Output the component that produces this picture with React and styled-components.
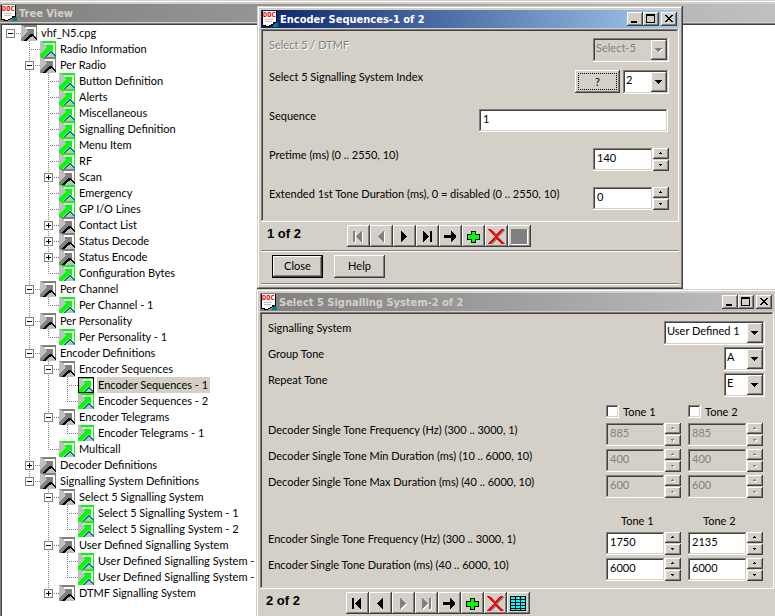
import React from "react";
import styled, { createGlobalStyle, css } from "styled-components";

const GlobalStyle = createGlobalStyle`
  * {
    box-sizing: border-box;
  }

  body {
    margin: 0;
    background: #ffffff;
    color: #000000;
    font-family: Lato, "Liberation Sans", sans-serif;
    font-size: 11px;
    line-height: 13px;
  }

  button, input, select {
    margin: 0;
    padding: 0;
    border: 0;
    border-radius: 0;
    outline: 0;
    color: inherit;
    font: inherit;
  }
`;

const raised = css`
  background: #d4d0c8;
  box-shadow: inset -1px -1px #404040, inset 1px 1px #ffffff,
    inset -2px -2px #808080;
`;

const sunken = css`
  box-shadow: inset -1px -1px #ffffff, inset 1px 1px #808080,
    inset -2px -2px #d4d0c8, inset 2px 2px #404040;
`;

const Desktop = styled.main`
  position: relative;
  height: 100vh;
  overflow: hidden;
  background: #ffffff;
`;

/* windows */

const TitleBar = styled.header`
  display: flex;
  align-items: center;
  height: 18px;
  padding: 0 2px 0 1px;
  background: ${(p) =>
    p.$active
      ? "linear-gradient(90deg, #0a246a, #a6caf0)"
      : "linear-gradient(90deg, #808080, #c0c0c0)"};
  color: ${(p) => (p.$active ? "#ffffff" : "#d4d0c8")};
`;

const Title = styled.h1`
  flex: 1;
  margin: 0 0 0 2px;
  padding-top: 1px;
  font-family: "DejaVu Sans Condensed", "DejaVu Sans", sans-serif;
  font-size: 11px;
  font-weight: bold;
  line-height: 16px;
  white-space: nowrap;
`;

const WindowButton = styled.button`
  ${raised}
  display: flex;
  width: 16px;
  height: 14px;
  color: #000000;

  &:last-child {
    margin-left: 2px;
  }
`;

const Frame = styled.section`
  position: absolute;
  padding: 4px;
  background: #d4d0c8;
  box-shadow: inset -1px -1px #404040, inset 1px 1px #d4d0c8,
    inset -2px -2px #808080, inset 2px 2px #ffffff;
`;

const SequenceFrame = styled(Frame)`
  left: 257px;
  top: 6px;
  width: 426px;
`;

const SystemFrame = styled(Frame)`
  left: 256px;
  right: -3px;
  top: 289px;
`;

const Panel = styled.div`
  ${sunken}
  margin-top: 1px;
  padding: ${(p) => p.$padding};
`;

/* tree */

const TreeWindow = styled.section`
  padding-top: 4px;
  background: linear-gradient(#d4d0c8 1px, #ffffff 1px, #ffffff 2px, #d4d0c8 2px);
`;

const TreePane = styled.nav`
  min-height: 100vh;
  margin-top: 1px;
  border-top: 1px solid #808080;
  border-left: 1px solid #808080;
  box-shadow: inset 1px 1px #404040;
  padding: 1px 0 0 1px;
  background: #ffffff;
`;

const TreeList = styled.ul`
  margin: 0;
  padding: 0;
  list-style: none;
`;

const TreeRow = styled.div`
  display: flex;
  height: 16px;
`;

const Guide = styled.span`
  display: flex;
  flex: none;
  align-items: center;
  width: 19px;
  height: 16px;
  padding: 1px 0 0 4px;
  background-image: ${(p) =>
      p.$line
        ? "repeating-linear-gradient(180deg, #808080 0 1px, transparent 1px 2px)"
        : "none"},
    ${(p) =>
      p.$branch
        ? "repeating-linear-gradient(90deg, #808080 0 1px, transparent 1px 2px)"
        : "none"};
  background-repeat: no-repeat;
  background-position: 8px 0, 8px 8px;
  background-size: 1px ${(p) => (p.$line === "half" ? "9px" : "16px")}, 11px 1px;
`;

const Expander = styled.button`
  display: flex;
  width: 9px;
  height: 9px;
  background: #ffffff;
  border: 1px solid #808080;
`;

const TreeLabel = styled.button`
  margin-left: 3px;
  padding: 0 2px 1px 1px;
  background: ${(p) => (p.$selected ? "#d4d0c8" : "transparent")};
  line-height: 15px;
  white-space: nowrap;
`;

/* form parts */

const Row = styled.div`
  display: flex;
  align-items: flex-start;
  height: ${(p) => p.$height}px;
`;

const Label = styled.label`
  flex: 1;
  white-space: nowrap;
  color: ${(p) => (p.$disabled ? "#808080" : "#000000")};
  text-shadow: ${(p) => (p.$disabled ? "1px 1px #ffffff" : "none")};
`;

const SelectBox = styled.div`
  position: relative;
  width: ${(p) => p.$width}px;
  height: 24px;
`;

const SelectInput = styled.select`
  ${sunken}
  appearance: none;
  width: 100%;
  height: 24px;
  padding: 0 18px 5px 3px;
  background: #ffffff;
  opacity: 1;

  &:disabled {
    background: #d4d0c8;
    color: #808080;
  }
`;

const SelectArrow = styled.span`
  ${raised}
  position: absolute;
  top: 2px;
  right: 2px;
  display: flex;
  align-items: center;
  justify-content: center;
  width: 16px;
  height: 20px;
  pointer-events: none;
`;

const TextInput = styled.input`
  ${sunken}
  flex: 1;
  min-width: 0;
  height: 23px;
  padding: 0 3px 4px 4px;
  background: #ffffff;

  &:disabled {
    background: #d4d0c8;
    color: #808080;
  }
`;

const WideField = styled.div`
  display: flex;
  width: 189px;
  margin-right: 1px;
`;

const SpinField = styled.div`
  display: flex;
  width: ${(p) => p.$width}px;
`;

const Spinner = styled.div`
  display: flex;
  flex-direction: column;
  gap: 1px;
  width: 16px;
`;

const SpinButton = styled.button`
  ${raised}
  display: flex;
  align-items: center;
  justify-content: center;
  height: 11px;
`;

const HelpIndex = styled.button`
  ${raised}
  width: 45px;
  height: 23px;
  margin-right: 3px;
  padding: 3px;

  span {
    display: block;
    border: 1px dotted #000000;
    line-height: 15px;
  }
`;

const Tones = styled.div`
  display: grid;
  grid-template-columns: 75px 75px;
  gap: 7px;
  margin-right: 2px;
`;

const ToneCheck = styled.label`
  display: flex;
  align-items: center;
  gap: 4px;
  padding-top: 6px;
`;

const CheckBox = styled.input`
  ${sunken}
  appearance: none;
  width: 13px;
  height: 13px;
  margin: 0;
  background: #ffffff;
`;

const ToneHeading = styled.span`
  padding: 13px 0 0 15px;
`;

/* record bar */

const RecordBar = styled.div`
  display: flex;
  height: 28px;
  padding: 3px 0 3px 6px;
`;

const Counter = styled.output`
  width: 80px;
  font-family: "Liberation Sans", sans-serif;
  font-size: 13px;
  font-weight: bold;
  line-height: 18px;
`;

const ToolButton = styled.button`
  ${raised}
  display: flex;
  align-items: center;
  justify-content: center;
  width: 23px;
  height: 22px;
`;

const Actions = styled.footer`
  display: flex;
  gap: 11px;
  height: 34px;
  margin-bottom: 1px;
  padding: 4px 11px 5px;
  border-top: 1px solid #808080;
  border-bottom: 1px solid #808080;
  box-shadow: inset 0 1px #ffffff, 0 1px #ffffff;
`;

const ActionButton = styled.button`
  ${raised}
  width: 51px;
  height: 23px;
  padding-bottom: 2px;
  border: ${(p) => (p.$default ? "1px solid #000000" : "0")};
`;

function DocIcon() {
  return (
    <svg width="16" height="16" viewBox="0 0 16 16" shapeRendering="crispEdges">
      <path d="M12 12h4v4h-5z" fill="#008080" />
      <path d="M0 0h15v12h-2v1h-2v1H9v1H7v1H3v-1H0z" fill="#000000" />
      <path d="M1 0h13v11h-3v2H9v1H7v1H4v-1H1z" fill="#ffffff" />
      <path d="M3 8.500h8M3 10.500h7" stroke="#c0c0c0" />
      <text
        x="1"
        y="6"
        fill="#ff0000"
        fontFamily="DejaVu Sans Mono"
        fontSize="7"
        fontWeight="bold"
      >
        DOC
      </text>
    </svg>
  );
}

function NodeIcon({ leaf, selected }) {
  const main = leaf ? "#00ff00" : "#808080";
  return (
    <svg width="16" height="16" viewBox="0 0 16 16" shapeRendering="crispEdges">
      <path d="M0 0h16v16H0z" fill="#c0c0c0" />
      <path d="M1 0h15v14h-1V2H3V1H1z" fill={main} />
      <path d="M5 2h10v11h-2V4H5z" fill="#ffffff" />
      <path
        d="M6 4h7v6h-1V9h-2v1H9v1H8v1H7v1H6v1H5v1H4v1H0v-3h1v-1h1v-1h1v-1h1V9h1V8h1V7h1V6H6z"
        fill={main}
      />
      {leaf ? (
        <path
          d="M5 15h1v-1h1v-1h1v-1h1v-1h1v-1h2v1h1v1h1v1h1v1h1v2h-1v-1h-1v-1h-1v-1h-1v-1h-2v1H9v1H8v1H7v1H5z"
          fill="#008080"
        />
      ) : (
        <path
          d="M3 15h1v-1h1v-1h1v-1h1v-1h1v-1h1V9h3v1h1v1h1v1h1v1h1v2h-1v-1h-1v-1h-1v-1h-1v-1h-1v1H9v1H8v1H7v1H6v1H3z"
          fill="#000000"
        />
      )}
      {selected && <path d="M.5.5h15v15H.5z" fill="none" stroke="#000000" />}
    </svg>
  );
}

function Triangle({ up, small, disabled }) {
  const d = small ? "M1 0h1v1h1v1H0V1h1z" : "M0 0h7v1H6v1H5v1H4v1H3V3H2V2H1V1H0z";
  const width = small ? 3 : 7;
  const height = small ? 2 : 4;
  const flip = small && !up;
  return (
    <svg
      width={width + 1}
      height={height + 1}
      viewBox={`0 0 ${width + 1} ${height + 1}`}
      shapeRendering="crispEdges"
    >
      <g transform={flip ? "matrix(1 0 0 -1 0 2)" : undefined}>
        {disabled && (
          <path
            d={d}
            fill="#ffffff"
            transform={flip ? "translate(1 -1)" : "translate(1 1)"}
          />
        )}
        <path d={d} fill={disabled ? "#808080" : "#000000"} />
      </g>
    </svg>
  );
}

const navShapes = {
  First: "M4 4h2v11H4zM13 4v11h-1v-1h-1v-1h-1v-1H9v-1H8v-1H7V9h1V8h1V7h1V6h1V5h1V4z",
  Previous: "M12 4v11h-1v-1h-1v-1H9v-1H8v-1H7v-1H6V9h1V8h1V7h1V6h1V5h1V4z",
  Next: "M6 4v11h1v-1h1v-1h1v-1h1v-1h1v-1h1V9h-1V8h-1V7H9V6H8V5H7V4z",
  Last: "M5 4v11h1v-1h1v-1h1v-1h1v-1h1v-1h1V9h-1V8H9V7H8V6H7V5H6V4zM12 4h2v11h-2z",
  "Go to": "M3 8h7V4h1v1h1v1h1v1h1v1h1v3h-1v1h-1v1h-1v1h-1v1h-1v-4H3z",
};

function ToolIcon({ name, disabled }) {
  const shape = navShapes[name];
  return (
    <svg width="19" height="19" viewBox="0 0 19 19" shapeRendering="crispEdges">
      {shape && disabled && (
        <path d={shape} fill="#ffffff" transform="translate(1 1)" />
      )}
      {shape && <path d={shape} fill={disabled ? "#808080" : "#000000"} />}
      {name === "Add" && (
        <path
          d="M7.500 4.500h4v3h4v5h-4v3h-4v-3h-4v-5h4z"
          fill="#00ff00"
          stroke="#000000"
        />
      )}
      {name === "Delete" && (
        <>
          <path d="M4 3l13 14M17 3L4 17" stroke="#808080" strokeWidth="2" />
          <path d="M2 2l14 15M16 2L2 17" stroke="#ff0000" strokeWidth="2" />
        </>
      )}
      {name === "Table" && !disabled && (
        <>
          <path d="M1 2h16v15H1z" fill="#00ffff" />
          <path
            d="M1.500 2.500h15v14h-15zM6.500 2v15M11.500 2v15M1 5.500h16M1 8.500h16M1 11.500h16M1 14.500h16"
            fill="none"
            stroke="#000000"
          />
        </>
      )}
      {name === "Table" && disabled && (
        <>
          <path d="M2 3h16v15H2z" fill="#ffffff" />
          <path d="M1 2h16v15H1z" fill="#808080" />
        </>
      )}
    </svg>
  );
}

function WindowControls() {
  return (
    <>
      <WindowButton aria-label="Minimize">
        <svg width="16" height="14" shapeRendering="crispEdges">
          <path d="M4 9h6v2H4z" />
        </svg>
      </WindowButton>
      <WindowButton aria-label="Maximize">
        <svg width="16" height="14" shapeRendering="crispEdges">
          <path d="M3 2h9v9H3zM4 4v6h7V4z" fillRule="evenodd" />
        </svg>
      </WindowButton>
      <WindowButton aria-label="Close window">
        <svg width="16" height="14" shapeRendering="crispEdges">
          <path d="M4 3h2v1h1v1h2V4h1V3h2v1h-1v1h-1v1H9v1h1v1h1v1h1v1h-2V9H9V8H7v1H6v1H4V9h1V8h1V7h1V6H6V5H5V4H4z" />
        </svg>
      </WindowButton>
    </>
  );
}

const tree = {
  name: "vhf_N5.cpg",
  children: [
    { name: "Radio Information" },
    {
      name: "Per Radio",
      children: [
        { name: "Button Definition" },
        { name: "Alerts" },
        { name: "Miscellaneous" },
        { name: "Signalling Definition" },
        { name: "Menu Item" },
        { name: "RF" },
        { name: "Scan", closed: true },
        { name: "Emergency" },
        { name: "GP I/O Lines" },
        { name: "Contact List", closed: true },
        { name: "Status Decode", closed: true },
        { name: "Status Encode", closed: true },
        { name: "Configuration Bytes" },
      ],
    },
    { name: "Per Channel", children: [{ name: "Per Channel - 1" }] },
    { name: "Per Personality", children: [{ name: "Per Personality - 1" }] },
    {
      name: "Encoder Definitions",
      children: [
        {
          name: "Encoder Sequences",
          children: [
            { name: "Encoder Sequences - 1", selected: true },
            { name: "Encoder Sequences - 2" },
          ],
        },
        {
          name: "Encoder Telegrams",
          children: [{ name: "Encoder Telegrams - 1" }],
        },
        { name: "Multicall" },
      ],
    },
    { name: "Decoder Definitions", closed: true },
    {
      name: "Signalling System Definitions",
      children: [
        {
          name: "Select 5 Signalling System",
          children: [
            { name: "Select 5 Signalling System - 1" },
            { name: "Select 5 Signalling System - 2" },
          ],
        },
        {
          name: "User Defined Signalling System",
          children: [
            { name: "User Defined Signalling System -" },
            { name: "User Defined Signalling System -" },
          ],
        },
        { name: "DTMF Signalling System", closed: true },
      ],
    },
  ],
};

function TreeNode({ node, guides, last, root }) {
  const branch = node.children || node.closed;
  const childGuides = root ? [false] : [...guides, !last];
  return (
    <li>
      <TreeRow>
        {guides.map((line, i) => (
          <Guide key={i} $line={line} />
        ))}
        <Guide $line={root ? false : last ? "half" : "full"} $branch>
          {branch && (
            <Expander aria-label={node.closed ? "Expand" : "Collapse"}>
              <svg width="7" height="7" shapeRendering="crispEdges">
                <path d={node.closed ? "M1 3h5v1H1zM3 1h1v5H3z" : "M1 3h5v1H1z"} />
              </svg>
            </Expander>
          )}
        </Guide>
        <NodeIcon leaf={!branch} selected={node.selected} />
        <TreeLabel $selected={node.selected}>{node.name}</TreeLabel>
      </TreeRow>
      {node.children && (
        <TreeList>
          {node.children.map((child, i) => (
            <TreeNode
              key={i}
              node={child}
              guides={childGuides}
              last={i === node.children.length - 1}
            />
          ))}
        </TreeList>
      )}
    </li>
  );
}

function Select({ id, value, width, disabled }) {
  return (
    <SelectBox $width={width}>
      <SelectInput id={id} disabled={disabled}>
        <option>{value}</option>
      </SelectInput>
      <SelectArrow>
        <Triangle disabled={disabled} />
      </SelectArrow>
    </SelectBox>
  );
}

function Spin({ id, label, value, width, disabled }) {
  return (
    <SpinField $width={width}>
      <TextInput
        id={id}
        aria-label={label}
        defaultValue={value}
        disabled={disabled}
      />
      <Spinner>
        <SpinButton aria-label="Increase" disabled={disabled}>
          <Triangle small up disabled={disabled} />
        </SpinButton>
        <SpinButton aria-label="Decrease" disabled={disabled}>
          <Triangle small disabled={disabled} />
        </SpinButton>
      </Spinner>
    </SpinField>
  );
}

function ToneRow({ id, label, values, disabled }) {
  return (
    <Row $height={26}>
      <Label htmlFor={id}>{label}</Label>
      <Tones>
        <Spin id={id} value={values[0]} width={75} disabled={disabled} />
        <Spin
          label={`${label} Tone 2`}
          value={values[1]}
          width={75}
          disabled={disabled}
        />
      </Tones>
    </Row>
  );
}

const tools = ["First", "Previous", "Next", "Last", "Go to", "Add", "Delete", "Table"];

function Records({ text, disabled }) {
  return (
    <RecordBar>
      <Counter>{text}</Counter>
      {tools.map((name) => (
        <ToolButton
          key={name}
          aria-label={name}
          disabled={disabled.includes(name)}
        >
          <ToolIcon name={name} disabled={disabled.includes(name)} />
        </ToolButton>
      ))}
    </RecordBar>
  );
}

function EncoderSequences() {
  return (
    <SequenceFrame>
      <TitleBar $active>
        <DocIcon />
        <Title>Encoder Sequences-1 of 2</Title>
        <WindowControls />
      </TitleBar>
      <Panel $padding="9px 10px 12px 8px">
        <Row $height={32}>
          <Label htmlFor="mode" $disabled>
            Select 5 / DTMF
          </Label>
          <Select id="mode" value="Select-5" width={76} disabled />
        </Row>
        <Row $height={39}>
          <Label htmlFor="index">Select 5 Signalling System Index</Label>
          <HelpIndex>
            <span>?</span>
          </HelpIndex>
          <Select id="index" value="2" width={46} />
        </Row>
        <Row $height={39}>
          <Label htmlFor="sequence">Sequence</Label>
          <WideField>
            <TextInput id="sequence" defaultValue="1" />
          </WideField>
        </Row>
        <Row $height={39}>
          <Label htmlFor="pretime">Pretime (ms) (0 .. 2550, 10)</Label>
          <Spin id="pretime" value="140" width={76} />
        </Row>
        <Row $height={23}>
          <Label htmlFor="extended">
            Extended 1st Tone Duration (ms), 0 = disabled (0 .. 2550, 10)
          </Label>
          <Spin id="extended" value="0" width={76} />
        </Row>
      </Panel>
      <Records text="1 of 2" disabled={["First", "Previous", "Table"]} />
      <Actions>
        <ActionButton $default>Close</ActionButton>
        <ActionButton>Help</ActionButton>
      </Actions>
    </SequenceFrame>
  );
}

function SignallingSystem() {
  return (
    <SystemFrame>
      <TitleBar>
        <DocIcon />
        <Title>Select 5 Signalling System-2 of 2</Title>
        <WindowControls />
      </TitleBar>
      <Panel $padding="9px 9px 5px 8px">
        <Row $height={26}>
          <Label htmlFor="system">Signalling System</Label>
          <Select id="system" value="User Defined 1" width={101} />
        </Row>
        <Row $height={26}>
          <Label htmlFor="group">Group Tone</Label>
          <Select id="group" value="A" width={41} />
        </Row>
        <Row $height={26}>
          <Label htmlFor="repeat">Repeat Tone</Label>
          <Select id="repeat" value="E" width={41} />
        </Row>
        <Row $height={24}>
          <Label as="span" />
          <Tones>
            <ToneCheck>
              <CheckBox type="checkbox" />
              Tone 1
            </ToneCheck>
            <ToneCheck>
              <CheckBox type="checkbox" />
              Tone 2
            </ToneCheck>
          </Tones>
        </Row>
        <ToneRow
          id="decoder-frequency"
          label="Decoder Single Tone Frequency (Hz) (300 .. 3000, 1)"
          values={["885", "885"]}
          disabled
        />
        <ToneRow
          id="decoder-min"
          label="Decoder Single Tone Min Duration (ms) (10 .. 6000, 10)"
          values={["400", "400"]}
          disabled
        />
        <ToneRow
          id="decoder-max"
          label="Decoder Single Tone Max Duration (ms) (40 .. 6000, 10)"
          values={["600", "600"]}
          disabled
        />
        <Row $height={31}>
          <Label as="span" />
          <Tones>
            <ToneHeading>Tone 1</ToneHeading>
            <ToneHeading>Tone 2</ToneHeading>
          </Tones>
        </Row>
        <ToneRow
          id="encoder-frequency"
          label="Encoder Single Tone Frequency (Hz) (300 .. 3000, 1)"
          values={["1750", "2135"]}
        />
        <ToneRow
          id="encoder-duration"
          label="Encoder Single Tone Duration (ms) (40 .. 6000, 10)"
          values={["6000", "6000"]}
        />
      </Panel>
      <Records text="2 of 2" disabled={["Next", "Last"]} />
    </SystemFrame>
  );
}

export default function App() {
  return (
    <>
      <GlobalStyle />
      <Desktop>
        <TreeWindow>
          <TitleBar>
            <DocIcon />
            <Title>Tree View</Title>
          </TitleBar>
          <TreePane>
            <TreeList>
              <TreeNode node={tree} guides={[]} root />
            </TreeList>
          </TreePane>
        </TreeWindow>
        <EncoderSequences />
        <SignallingSystem />
      </Desktop>
    </>
  );
}
